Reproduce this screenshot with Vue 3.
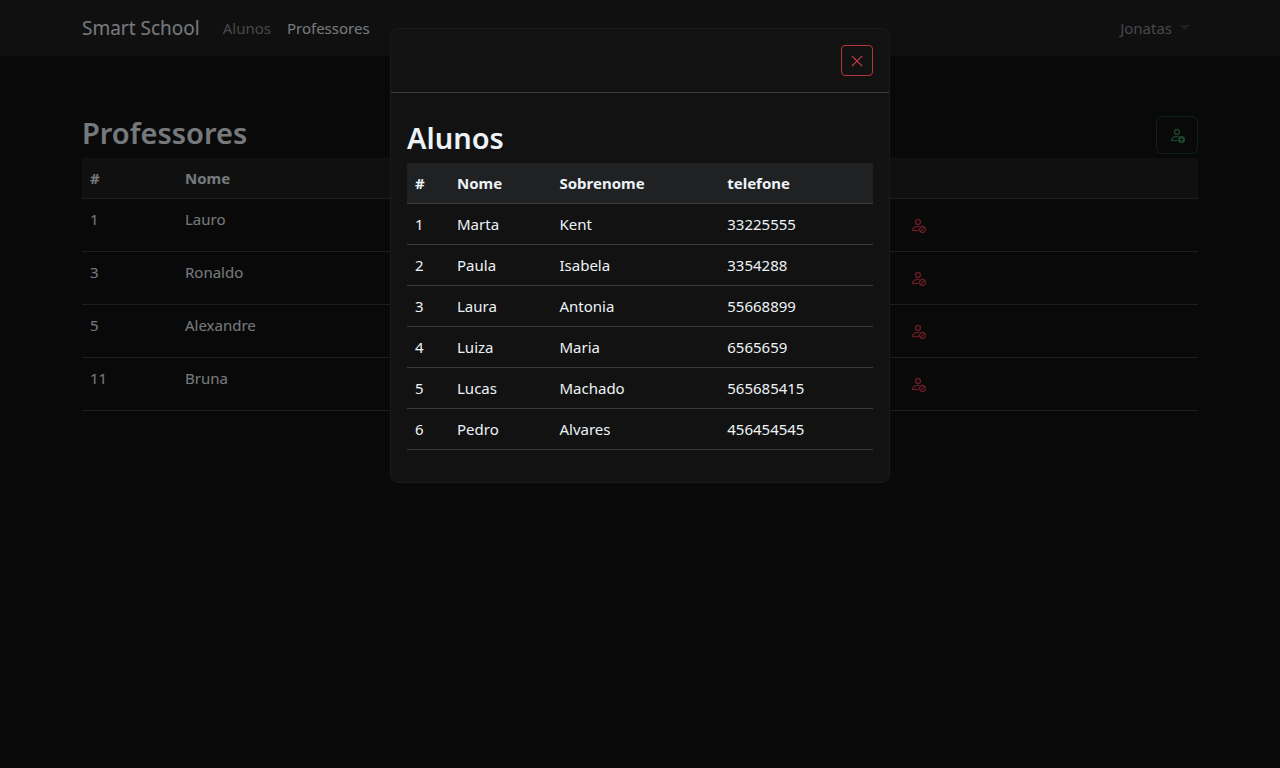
<script setup>
import { ref } from 'vue'

const teachers = ref([
  { id: 1, name: 'Lauro' },
  { id: 3, name: 'Ronaldo' },
  { id: 5, name: 'Alexandre' },
  { id: 11, name: 'Bruna' },
])

const students = [
  { id: 1, name: 'Marta', surname: 'Kent', phone: '33225555' },
  { id: 2, name: 'Paula', surname: 'Isabela', phone: '3354288' },
  { id: 3, name: 'Laura', surname: 'Antonia', phone: '55668899' },
  { id: 4, name: 'Luiza', surname: 'Maria', phone: '6565659' },
  { id: 5, name: 'Lucas', surname: 'Machado', phone: '565685415' },
  { id: 6, name: 'Pedro', surname: 'Alvares', phone: '456454545' },
]

const open = ref(true)

function removeTeacher(id) {
  teachers.value = teachers.value.filter((t) => t.id !== id)
}
</script>

<template>
  <div class="page">
    <header class="navbar">
      <nav class="container bar">
        <a class="brand" href="#">Smart School</a>
        <a class="link" href="#alunos">Alunos</a>
        <a class="link active" href="#professores">Professores</a>
        <button class="user" type="button">Jonatas<span class="caret"></span></button>
      </nav>
    </header>

    <main class="container content">
      <div class="title-row">
        <h2>Professores</h2>
        <button class="add" type="button" aria-label="Adicionar professor" @click="open = true">
          <svg width="16" height="16" viewBox="0 0 16 16" fill="currentColor">
            <path stroke="currentColor" stroke-width=".3" d="M11 5a3 3 0 1 1-6 0 3 3 0 0 1 6 0M8 7a2 2 0 1 0 0-4 2 2 0 0 0 0 4M8.256 14a4.5 4.5 0 0 1-.229-1.004H3c.001-.246.154-.986.832-1.664C4.484 10.68 5.711 10 8 10q.39 0 .74.025c.226-.341.496-.65.804-.918Q8.844 9.002 8 9c-5 0-6 3-6 4s1 1 1 1z" />
            <path d="M12.5 16a3.5 3.5 0 1 0 0-7 3.5 3.5 0 0 0 0 7m.5-5v1h1a.5.5 0 0 1 0 1h-1v1a.5.5 0 0 1-1 0v-1h-1a.5.5 0 0 1 0-1h1v-1a.5.5 0 0 1 1 0" />
          </svg>
        </button>
      </div>
      <table class="table teachers">
        <thead>
          <tr>
            <th class="t-id" scope="col">#</th>
            <th class="t-name" scope="col">Nome</th>
            <td class="t-actions"></td>
          </tr>
        </thead>
        <tbody>
          <tr v-for="t in teachers" :key="t.id">
            <td>{{ t.id }}</td>
            <td>{{ t.name }}</td>
            <td>
              <button class="remove" type="button" :aria-label="`Remover ${t.name}`" @click="removeTeacher(t.id)">
                <svg width="16" height="16" viewBox="0 0 16 16" fill="currentColor" stroke="currentColor" stroke-width=".3">
                  <path d="M13.879 10.414a2.501 2.501 0 0 0-3.465 3.465zm.707.707-3.465 3.465a2.501 2.501 0 0 0 3.465-3.465m-4.56-1.096a3.5 3.5 0 1 1 4.949 4.95 3.5 3.5 0 0 1-4.95-4.95ZM11 5a3 3 0 1 1-6 0 3 3 0 0 1 6 0M8 7a2 2 0 1 0 0-4 2 2 0 0 0 0 4m.256 7a4.5 4.5 0 0 1-.229-1.004H3c.001-.246.154-.986.832-1.664C4.484 10.68 5.711 10 8 10q.39 0 .74.025c.226-.341.496-.65.804-.918Q8.844 9.002 8 9c-5 0-6 3-6 4s1 1 1 1z" />
                </svg>
              </button>
            </td>
          </tr>
        </tbody>
      </table>
    </main>

    <div v-if="open" class="backdrop">
      <section class="modal" role="dialog" aria-modal="true" aria-labelledby="modal-title">
        <div class="modal-header">
          <button class="close" type="button" aria-label="Fechar" @click="open = false">
            <svg width="14" height="14" viewBox="0 0 16 16" fill="currentColor" stroke="currentColor" stroke-width=".3">
              <path d="M2.146 2.854a.5.5 0 1 1 .708-.708L8 7.293l5.146-5.147a.5.5 0 0 1 .708.708L8.707 8l5.147 5.146a.5.5 0 0 1-.708.708L8 8.707l-5.146 5.147a.5.5 0 0 1-.708-.708L7.293 8z" />
            </svg>
          </button>
        </div>
        <div class="modal-body">
          <h2 id="modal-title">Alunos</h2>
          <table class="table students">
            <thead>
              <tr>
                <th class="s-id" scope="col">#</th>
                <th class="s-name" scope="col">Nome</th>
                <th class="s-surname" scope="col">Sobrenome</th>
                <th class="s-phone" scope="col">telefone</th>
              </tr>
            </thead>
            <tbody>
              <tr v-for="s in students" :key="s.id">
                <td>{{ s.id }}</td>
                <td>{{ s.name }}</td>
                <td>{{ s.surname }}</td>
                <td>{{ s.phone }}</td>
              </tr>
            </tbody>
          </table>
        </div>
      </section>
    </div>
  </div>
</template>

<style>
body {
  margin: 0;
  background: #121212;
}
</style>

<style scoped>
.page {
  min-height: 100vh;
  background: #121212;
  color: #edf2f7;
  font-family: "Segoe UI", "Noto Sans", "Open Sans", sans-serif;
  font-size: 15px;
  line-height: 24px;
}
*,
*::before,
*::after {
  box-sizing: border-box;
}
button {
  margin: 0;
  padding: 0;
  border: 0;
  background: transparent;
  font: inherit;
  cursor: pointer;
}
svg {
  display: block;
}
.container {
  width: 100%;
  max-width: 1140px;
  margin: 0 auto;
  padding: 0 12px;
}
.navbar {
  background: #202123;
}
.bar {
  display: flex;
  align-items: center;
  min-height: 56px;
}
.brand {
  margin-right: 15px;
  color: #edf2f7;
  font-size: 19px;
  line-height: 30px;
  text-decoration: none;
}
.link {
  padding: 8px;
  color: #8e9093;
  text-decoration: none;
}
.link.active {
  color: #edf2f7;
}
.user {
  display: flex;
  align-items: center;
  gap: 8px;
  margin-left: auto;
  padding: 8px;
  color: #8e9093;
}
.caret {
  margin-bottom: 2px;
  border: 5px solid transparent;
  border-top-color: #3c3d40;
  border-bottom: 0;
}
h2 {
  margin: 0;
  font-size: 29px;
  font-weight: 600;
  line-height: 38px;
}
.content {
  padding-top: 58px;
}
.title-row {
  display: flex;
  justify-content: space-between;
  align-items: flex-start;
  min-height: 44px;
}
.add {
  display: flex;
  align-items: center;
  justify-content: center;
  width: 42px;
  height: 38px;
  margin-top: 2px;
  border: 1px solid #1e4535;
  border-radius: 6px;
  color: #38965f;
}
.table {
  width: 100%;
  border-collapse: separate;
  border-spacing: 0;
  table-layout: fixed;
}
.table th,
.table td {
  padding: 8px;
  border-bottom: 1px solid #3c3c3c;
  text-align: left;
  vertical-align: top;
}
.table th {
  font-weight: 700;
}
.table thead th,
.table thead td {
  background: #202123;
}
.t-id {
  width: 95px;
}
.t-actions {
  width: 308px;
}
.remove {
  display: flex;
  align-items: center;
  height: 36px;
  padding: 0 12px;
  color: #e03c4b;
}
.backdrop {
  position: fixed;
  inset: 0;
  overflow-y: auto;
  padding: 28px 0;
  background: rgba(0, 0, 0, 0.5);
}
.modal {
  width: 100%;
  max-width: 500px;
  margin: 0 auto;
  border: 1px solid #1b1b1c;
  border-radius: 8px;
  background: #121212;
}
.modal-header {
  display: flex;
  justify-content: flex-end;
  padding: 16px;
  border-bottom: 1px solid #3c3c3c;
}
.close {
  display: flex;
  align-items: center;
  justify-content: center;
  width: 32px;
  height: 31px;
  border: 1px solid #b8343f;
  border-radius: 4px;
  color: #e04552;
}
.modal-body {
  padding: 26px 16px 32px;
}
.modal-body h2 {
  margin-bottom: 6px;
}
.s-id {
  width: 42px;
}
.s-surname {
  width: 36%;
}
.s-phone {
  width: 33%;
}
</style>
